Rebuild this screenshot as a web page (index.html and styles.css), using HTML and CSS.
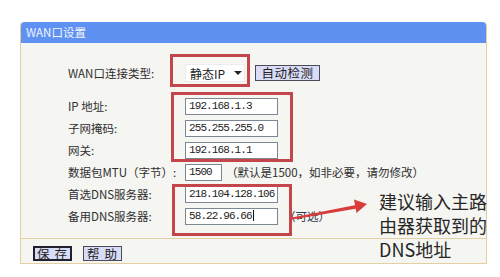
FILE: index.html
```html
<!DOCTYPE html>
<html lang="zh-CN">
<head>
    <meta charset="UTF-8">
    <meta name="viewport" content="width=device-width, initial-scale=1.0">
    <title>WAN口设置</title>
    <link rel="stylesheet" href="styles.css">
</head>
<body>
    <div class="shot">
        <div class="panel">
            <div class="panel-title">WAN口设置</div>
            <div class="panel-body">
                <div class="row row-type">
                    <label>WAN口连接类型:</label>
                    <div class="field">
                        <div class="select">静态IP<i class="caret"></i></div>
                        <button class="btn btn-detect">自动检测</button>
                    </div>
                </div>
                <div class="row">
                    <label>IP 地址:</label>
                    <div class="field"><div class="text">192.168.1.3</div></div>
                </div>
                <div class="row">
                    <label>子网掩码:</label>
                    <div class="field"><div class="text">255.255.255.0</div></div>
                </div>
                <div class="row">
                    <label>网关:</label>
                    <div class="field"><div class="text">192.168.1.1</div></div>
                </div>
                <div class="row">
                    <label>数据包MTU（字节）:</label>
                    <div class="field">
                        <div class="text text-short">1500</div>
                        <span class="hint">（默认是1500，如非必要，请勿修改）</span>
                    </div>
                </div>
                <div class="row">
                    <label>首选DNS服务器:</label>
                    <div class="field"><div class="text">218.104.128.106</div></div>
                </div>
                <div class="row">
                    <label>备用DNS服务器:</label>
                    <div class="field">
                        <div class="text">58.22.96.66<span class="cursor"></span></div>
                        <span class="hint hint-opt">（可选）</span>
                    </div>
                </div>
            </div>
            <div class="panel-foot">
                <button class="btn btn-main">保 存</button>
                <button class="btn">帮 助</button>
            </div>
        </div>

        <!-- annotations drawn over the screenshot -->
        <div class="mark mark-type"></div>
        <div class="mark mark-ip"></div>
        <div class="mark mark-dns"></div>
        <svg class="arrow" width="82" height="28" viewBox="0 0 82 28">
            <path d="M4 21.5 L68 9 L69 12.5 L4.5 23.5 Z" fill="#d93d3b"/>
            <polygon points="79,8 66,3.5 68.5,17" fill="#d93d3b"/>
        </svg>
        <div class="note">建议输入主路<br>由器获取到的<br>DNS地址</div>
    </div>
</body>
</html>
```

FILE: styles.css
```css
*{
    margin:0;
    padding:0;
    box-sizing:border-box;
}
body {
    background:#fff;
    font-family:"Noto Sans CJK SC","Liberation Sans",sans-serif;
    font-size:12px;
    color:#2f2f2f;
}
.shot {
    position:relative;
    width:500px;
    height:277px;
    padding:22px 0 0 20px;
    overflow:hidden;
}
.panel {
    width:467px;
    border:1px solid #e3cfa2;
    border-top:0;
    border-radius:4px 4px 0 0;
    background:#f5f5f2;
}
.panel-title {
    height:21px;
    line-height:21px;
    padding-left:5px;
    background:#5e91f2;
    border-radius:4px 4px 0 0;
    color:#f2f5ff;
    font-size:11.5px;
}
.panel-body {
    padding:19px 0 11px 47px;
}
.row {
    display:grid;
    grid-template-columns:117px auto;
    align-items:center;
    height:22px;
}
.row-type {
    margin-bottom:11px;
}
.row label {
    font-size:11.5px;
    white-space:nowrap;
}
.field {
    display:flex;
    align-items:center;
}
.select {
    display:flex;
    align-items:center;
    width:60px;
    height:18px;
    padding-left:4px;
    background:#fff;
    border:1px solid #ececec;
    font-size:12px;
    color:#222;
}
.caret {
    margin-left:9px;
    width:0;
    height:0;
    border-left:4px solid transparent;
    border-right:4px solid transparent;
    border-top:4px solid #222;
}
.btn {
    height:16px;
    padding:0 8px;
    background:#d9dcf6;
    border:1px solid #4a4a58;
    font-family:"Noto Sans CJK SC",sans-serif;
    font-size:12px;
    line-height:14px;
    color:#222;
    white-space:nowrap;
}
.btn-detect {
    width:65px;
    padding:0;
    margin-left:10px;
    font-size:12.5px;
    letter-spacing:0.5px;
}
.text {
    width:93px;
    height:17px;
    padding-left:3px;
    background:#fff;
    border:1px solid #7c8794;
    font-family:"Liberation Mono",monospace;
    font-size:11px;
    letter-spacing:-0.9px;
    line-height:15px;
    color:#222;
}
.text-short {
    width:37px;
}
.cursor {
    display:inline-block;
    width:1px;
    height:11px;
    margin-left:1px;
    background:#111;
    vertical-align:-2px;
}
.hint {
    margin-left:4px;
    font-size:11.5px;
    white-space:nowrap;
}
.hint-opt {
    margin-left:6px;
    color:#34384a;
}
.panel-foot {
    display:flex;
    gap:11px;
    height:25px;
    padding:7px 0 0 12px;
    border-top:1px solid #e3cfa2;
}
.panel-foot .btn {
    width:39px;
    height:15px;
    padding:0;
    font-size:12.5px;
    letter-spacing:1px;
}
.btn-main {
    border:2px solid #202030;
    line-height:11px;
}
.mark {
    position:absolute;
    border:3px solid #c4464b;
}
.mark-type {
    left:170px;
    top:54px;
    width:80px;
    height:33px;
}
.mark-ip {
    left:171px;
    top:92px;
    width:122px;
    height:70px;
}
.mark-dns {
    left:172px;
    top:184px;
    width:120px;
    height:52px;
}
.arrow {
    position:absolute;
    left:288px;
    top:196px;
}
.note {
    position:absolute;
    left:379px;
    top:189px;
    font-size:18px;
    line-height:24px;
    color:#262626;
    white-space:nowrap;
}
```
